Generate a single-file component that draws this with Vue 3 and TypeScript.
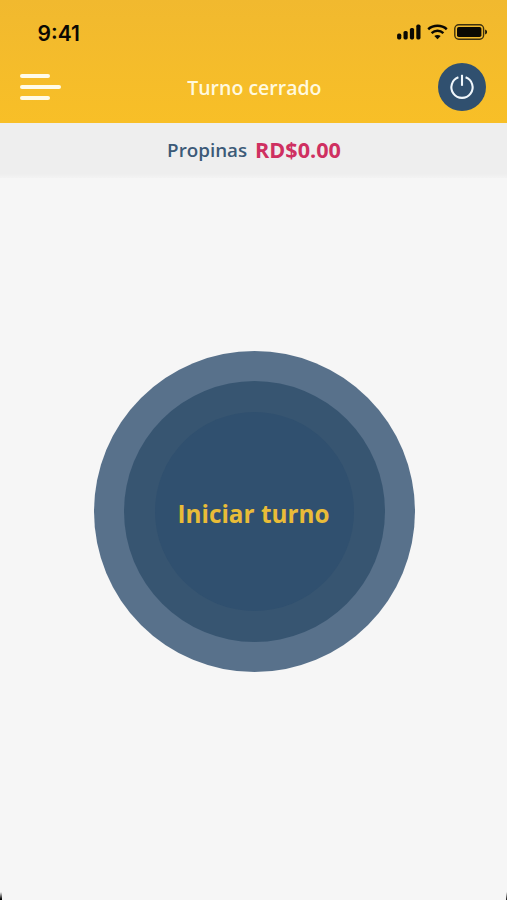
<script setup lang="ts">
import { ref } from 'vue'

const time = ref<string>('9:41')
const shiftStatus = ref<string>('Turno cerrado')
const tips = ref<number>(0)
const formatTips = (value: number): string => `RD$${value.toFixed(2)}`
</script>

<template>
  <div class="screen">
    <header class="top">
      <div class="status">
        <span class="time">{{ time }}</span>
        <div class="indicators">
          <svg class="signal" width="25" height="16" viewBox="0 0 25 16">
            <rect x="0.1" y="9.6" width="4.2" height="5.8" rx="1.6" />
            <rect x="6.5" y="7" width="4.2" height="8.4" rx="1.6" />
            <rect x="12.9" y="4" width="4.2" height="11.4" rx="1.6" />
            <rect x="19.3" y="0.6" width="4.2" height="14.8" rx="1.6" />
          </svg>
          <svg class="wifi" width="21" height="16" viewBox="0 0 21 16">
            <path d="M1.2 5.3C6.5 0.7 14.5 0.7 19.8 5.3" />
            <path d="M4.6 9.1c3.4-3 8.4-3 11.8 0" />
            <path class="dot" d="M7.3 12.1c1.9-1.6 4.5-1.6 6.4 0L10.5 15.3z" />
          </svg>
          <svg class="battery" width="34" height="16" viewBox="0 0 34 16">
            <rect class="shell" x="0.8" y="0.8" width="28.8" height="14.4" rx="4" />
            <rect x="3" y="3" width="24.4" height="10" rx="1.8" />
            <path d="M31.2 5.6c2.4 1 2.4 4 0 5z" />
          </svg>
        </div>
      </div>
      <nav class="bar">
        <button class="menu" aria-label="Menú">
          <span class="line"></span>
          <span class="line long"></span>
          <span class="line"></span>
        </button>
        <h1 class="title">{{ shiftStatus }}</h1>
        <button class="power" aria-label="Apagar">
          <svg width="26" height="26" viewBox="0 0 26 26">
            <path d="M9.4 3.3A10.6 10.6 0 1 0 16.6 3.3" />
            <path d="M13 0.8V11.8" />
          </svg>
        </button>
      </nav>
    </header>
    <section class="tips">
      <span class="label">Propinas</span>
      <strong class="amount">{{ formatTips(tips) }}</strong>
    </section>
    <main class="content">
      <button class="start">
        <span class="ring">
          <span class="core">
            <span class="start-label">Iniciar turno</span>
          </span>
        </span>
      </button>
    </main>
    <i class="corner left"></i>
    <i class="corner right"></i>
  </div>
</template>

<style>
body {
  margin: 0;
}
</style>

<style scoped>
.screen {
  position: relative;
  display: flex;
  flex-direction: column;
  width: 507px;
  height: 900px;
  overflow: hidden;
  background: #f6f6f6;
  font-family: 'Open Sans', 'Noto Sans', sans-serif;
}
button {
  padding: 0;
  border: 0;
  background: none;
  font: inherit;
}
.top {
  height: 123px;
  background: linear-gradient(#f1b92f, #f8bf27);
}
.status {
  display: flex;
  justify-content: space-between;
  height: 63px;
  box-sizing: border-box;
  padding: 20px 19px 0 37.5px;
}
.time {
  height: 26px;
  padding-top: 1px;
  font: 600 21px/26px Inter, sans-serif;
  color: #0b0903;
}
.indicators {
  display: flex;
  padding-top: 4px;
  fill: #0b0903;
}
.wifi {
  margin-left: 5px;
}
.wifi path {
  fill: none;
  stroke: #0b0903;
  stroke-width: 2.5;
}
.wifi .dot {
  fill: #0b0903;
  stroke: none;
}
.battery {
  margin-left: 6px;
}
.battery .shell {
  fill: none;
  stroke: #3c300f;
  stroke-width: 1.4;
}
.bar {
  display: grid;
  grid-template-columns: 48px 1fr 48px;
  align-items: center;
  height: 48px;
  padding: 0 20.7px 0 20.4px;
}
.menu {
  display: flex;
  flex-direction: column;
  gap: 7.5px;
}
.line {
  width: 29.5px;
  height: 3.7px;
  border-radius: 2px;
  background: #fffbe9;
}
.line.long {
  width: 40.5px;
}
.title {
  margin: 2px 0 0 2px;
  text-align: center;
  font-size: 19.5px;
  line-height: 26px;
  font-weight: 600;
  color: #fff9df;
}
.power {
  display: flex;
  align-items: center;
  justify-content: center;
  width: 48px;
  height: 48px;
  border-radius: 50%;
  background: #30506f;
}
.power svg {
  fill: none;
  stroke: #f0f7fc;
  stroke-width: 2.1;
}
.tips {
  display: flex;
  align-items: center;
  justify-content: center;
  gap: 8px;
  height: 53px;
  padding: 0 0 2px 1px;
  background: linear-gradient(#eeeeee 92%, #f3f3f3);
}
.label {
  font-size: 18.8px;
  font-weight: 600;
  color: #3c5a78;
}
.amount {
  font-size: 21.6px;
  font-weight: 700;
  color: #cf3061;
}
.content {
  display: flex;
  justify-content: center;
  padding: 173px 0 0 2px;
}
.start,
.ring,
.core {
  display: flex;
  align-items: center;
  justify-content: center;
  border-radius: 50%;
}
.start {
  width: 321px;
  height: 321px;
  background: #58718b;
}
.ring {
  width: 261px;
  height: 261px;
  background: #375571;
}
.core {
  width: 199px;
  height: 199px;
  background: #30506f;
}
.start-label {
  padding: 4px 2px 0 0;
  font-size: 24.3px;
  font-weight: 700;
  white-space: nowrap;
  color: #e9bc38;
}
.corner {
  position: absolute;
  bottom: 0;
  width: 2px;
  height: 8px;
}
.corner.left {
  left: 0;
  background: linear-gradient(to bottom, transparent, #000 90%);
}
.corner.right {
  right: 0;
  width: 1px;
  background: linear-gradient(to bottom, transparent, #222 90%);
}
</style>
